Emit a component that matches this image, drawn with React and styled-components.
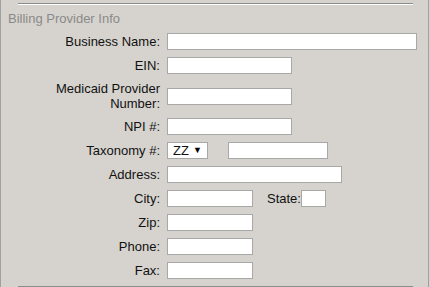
import React from 'react';
import styled, { createGlobalStyle } from 'styled-components';

const GlobalStyle = createGlobalStyle`
    html, body {
        margin: 0;
        padding: 0;
        background-color: #d6d3ce;
    }
`;

const Panel = styled.div`
    width: 429px;
    height: 287px;
    box-sizing: border-box;
    background-color: #d6d3ce;
    border-left: 1px solid #a0a0a0;
    border-right: 1px solid #a0a0a0;
    font-family: 'Liberation Sans', Arial, sans-serif;
    font-size: 13px;
    line-height: 15px;
    color: #111111;
    padding-top: 3px;
`;

const Rule = styled.div`
    margin: 0 15px 0 17px;
    border-top: 1px solid #8c8c8c;
    border-bottom: 1px solid #ffffff;
`;

const Title = styled.div`
    color: #8a8a8a;
    padding-left: 7px;
    margin-top: 6px;
    margin-bottom: 7px;
`;

const Form = styled.div`
    display: grid;
    grid-template-columns: 110px 1fr;
    column-gap: 7px;
    row-gap: 7px;
    align-items: center;
    margin-left: 49px;
    margin-bottom: 7px;
`;

const Label = styled.label`
    text-align: right;
`;

const Field = styled.div`
    display: flex;
    align-items: center;
    height: ${(p) => (p.$tall ? '30px' : '17px')};
`;

const TextInput = styled.input`
    box-sizing: border-box;
    width: ${(p) => p.$w}px;
    height: 17px;
    margin: 0;
    padding: 0 2px;
    border: 1px solid #a8a8a8;
    background: #ffffff;
    font: inherit;
    outline: none;
`;

const SelectWrap = styled.div`
    position: relative;
    width: 41px;
    height: 17px;
    margin-right: 20px;
`;

const Select = styled.select`
    appearance: none;
    box-sizing: border-box;
    width: 100%;
    height: 100%;
    margin: 0;
    padding: 0 0 0 5px;
    border: 1px solid #a8a8a8;
    border-radius: 0;
    background: #ffffff;
    font: inherit;
    color: #111111;
`;

const Arrow = styled.span`
    position: absolute;
    right: 6px;
    top: 0;
    font-size: 9px;
    line-height: 17px;
    color: #000;
    pointer-events: none;
`;

const InlineLabel = styled.span`
    margin: 0 0 0 14px;
`;

const rows = [
    { label: 'Business Name:', width: 250 },
    { label: 'EIN:', width: 125 },
    { label: 'Medicaid Provider Number:', width: 125, tall: true },
    { label: 'NPI #:', width: 125 },
];

const lower = [
    { label: 'Zip:', width: 86 },
    { label: 'Phone:', width: 86 },
    { label: 'Fax:', width: 86 },
];

const App = () => (
    <>
        <GlobalStyle />
        <Panel>
            <Rule />
            <Title>Billing Provider Info</Title>
            <Form>
                {rows.map((r) => (
                    <React.Fragment key={r.label}>
                        <Label>{r.label}</Label>
                        <Field $tall={r.tall}>
                            <TextInput $w={r.width} />
                        </Field>
                    </React.Fragment>
                ))}
                <Label>Taxonomy #:</Label>
                <Field>
                    <SelectWrap>
                        <Select defaultValue="ZZ">
                            <option>ZZ</option>
                        </Select>
                        <Arrow>▼</Arrow>
                    </SelectWrap>
                    <TextInput $w={100} />
                </Field>
                <Label>Address:</Label>
                <Field>
                    <TextInput $w={175} />
                </Field>
                <Label>City:</Label>
                <Field>
                    <TextInput $w={86} />
                    <InlineLabel>State:</InlineLabel>
                    <TextInput $w={25} />
                </Field>
                {lower.map((r) => (
                    <React.Fragment key={r.label}>
                        <Label>{r.label}</Label>
                        <Field>
                            <TextInput $w={r.width} />
                        </Field>
                    </React.Fragment>
                ))}
            </Form>
            <Rule />
        </Panel>
    </>
);

export default App;
